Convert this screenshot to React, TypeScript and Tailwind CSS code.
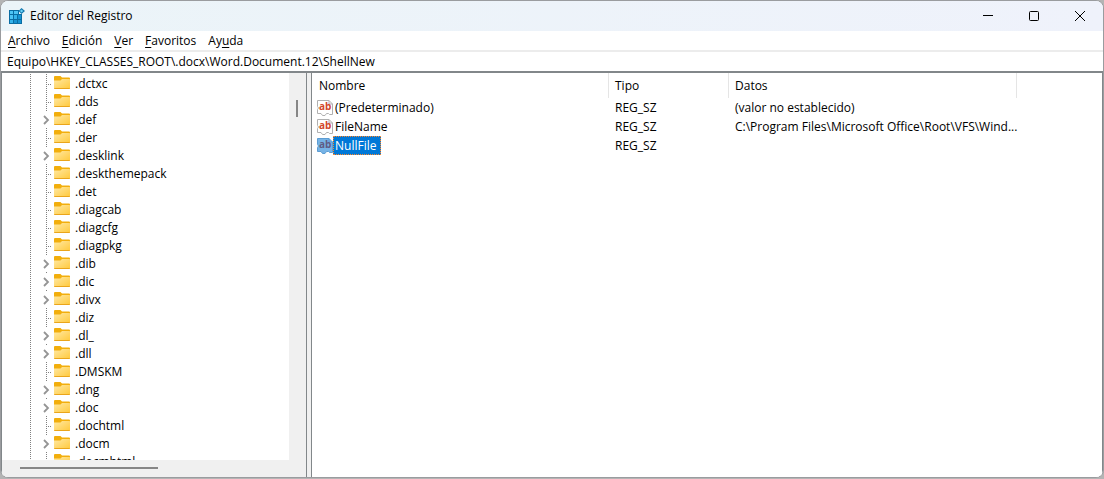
import React, { useState } from 'react';
import clsx from 'clsx';

interface TreeKey {
  name: string;
  hasChildren?: boolean;
}

interface RegistryValue {
  name: string;
  type: string;
  data: string;
}

const menuItems = [
  { before: '', hotkey: 'A', after: 'rchivo' },
  { before: '', hotkey: 'E', after: 'dición' },
  { before: '', hotkey: 'V', after: 'er' },
  { before: '', hotkey: 'F', after: 'avoritos' },
  { before: 'Ay', hotkey: 'u', after: 'da' },
];

const treeKeys: TreeKey[] = [
  { name: '.dctxc' },
  { name: '.dds' },
  { name: '.def', hasChildren: true },
  { name: '.der' },
  { name: '.desklink', hasChildren: true },
  { name: '.deskthemepack' },
  { name: '.det' },
  { name: '.diagcab' },
  { name: '.diagcfg' },
  { name: '.diagpkg' },
  { name: '.dib', hasChildren: true },
  { name: '.dic', hasChildren: true },
  { name: '.divx', hasChildren: true },
  { name: '.diz' },
  { name: '.dl_', hasChildren: true },
  { name: '.dll', hasChildren: true },
  { name: '.DMSKM' },
  { name: '.dng', hasChildren: true },
  { name: '.doc', hasChildren: true },
  { name: '.dochtml' },
  { name: '.docm', hasChildren: true },
  { name: '.docmhtml' },
];

const values: RegistryValue[] = [
  { name: '(Predeterminado)', type: 'REG_SZ', data: '(valor no establecido)' },
  {
    name: 'FileName',
    type: 'REG_SZ',
    data: 'C:\\Program Files\\Microsoft Office\\Root\\VFS\\Wind...',
  },
  { name: 'NullFile', type: 'REG_SZ', data: '' },
];

const RegeditIcon = () => (
  <svg className="h-4 w-4 shrink-0" viewBox="0 0 16 16" aria-hidden="true">
    <path d="M0 2h10v4h3v10H0z" fill="#0a6da3" />
    <path d="M1 3h3v3H1zM5 3h4v3H5zM1 7h3v4H1z" fill="#4cc4f5" />
    <path d="M5 7h3v4H5zM1 12h3v3H1z" fill="#35b4ec" />
    <path d="M9 7h3v4H9zM5 12h3v3H5zM9 12h3v3H9z" fill="#1593d2" />
    <path d="M12.5 0L16 3l-3.500 3L9.500 3z" fill="#1478ae" />
    <path d="M12.500 1.500L14.200 3l-1.700 1.500L11 3z" fill="#6bd3f8" />
  </svg>
);

const FolderIcon = () => (
  <svg className="h-[14px] w-4 shrink-0" viewBox="0 0 16 14" aria-hidden="true">
    <defs>
      <linearGradient id="folder" x1="0" y1="0" x2="1" y2="1">
        <stop offset="0" stopColor="#ffe8a3" />
        <stop offset="1" stopColor="#ffc93c" />
      </linearGradient>
    </defs>
    <path d="M0 1q0-1 1-1h5.500L8 1.500h7q1 0 1 1V6H0z" fill="#f2ae0c" />
    <path d="M0 4.500h6.500L8 3h7.500q.5 0 .5.500V12q0 1-1 1H1q-1 0-1-1z" fill="url(#folder)" />
    <path d="M0 12h16q0 1-1 1H1q-1 0-1-1z" fill="#eaa51b" />
  </svg>
);

const StringIcon = ({ selected }: { selected: boolean }) => (
  <svg className="h-4 w-4 shrink-0" viewBox="0 0 16 16" aria-hidden="true">
    <path
      d="M.5.500h11.500l3.500 3.500v10.500h-3l-1-1h-2l-1.500 2h-2.500l-1.500-2H.5v-4l1-1.500-1-1.500z"
      fill={selected ? '#76b3e6' : '#ffffff'}
      stroke={selected ? '#5c9dd3' : '#b0b0b0'}
    />
    <path d="M12 .500V4h3.500" fill="none" stroke={selected ? '#5c9dd3' : '#b0b0b0'} />
    <text
      x="2"
      y="10"
      fontSize="10"
      fontWeight="700"
      fill={selected ? '#5f5c85' : '#d2472a'}
      className="font-['Open_Sans',sans-serif]"
    >
      ab
    </text>
  </svg>
);

// Dotted connector lines to the left of a key
const Branch = ({ hasChildren }: { hasChildren?: boolean }) => (
  <svg
    className="h-[18px] w-[26px] shrink-0"
    viewBox="0 0 26 18"
    fill="none"
    stroke="#808080"
    shapeRendering="crispEdges"
    aria-hidden="true"
  >
    <path d="M4.500 0v18" strokeDasharray="1 1" />
    {hasChildren ? (
      <>
        <path d="M20.500 0v1" />
        <path d="M18 6l4 4-4 4" stroke="#949494" strokeWidth="1.800" shapeRendering="auto" />
      </>
    ) : (
      <path d="M20.500 0v18M20 10.500h6" strokeDasharray="1 1" />
    )}
  </svg>
);

const TitleBar = () => (
  <header className="flex h-[30px] shrink-0 items-center bg-linear-to-r from-[#ebf4f8] to-[#eff2fb] pl-2">
    <RegeditIcon />
    <h1 className="ml-[5px] flex-1 text-[12px]">Editor del Registro</h1>
    <button type="button" aria-label="Minimizar" className="flex h-full w-[46px] items-center justify-center">
      <svg className="h-[10px] w-[10px]" viewBox="0 0 10 10" stroke="#000" shapeRendering="crispEdges">
        <path d="M0 4.500h10" />
      </svg>
    </button>
    <button type="button" aria-label="Maximizar" className="flex h-full w-[46px] items-center justify-center">
      <svg className="h-[10px] w-[10px]" viewBox="0 0 10 10" fill="none" stroke="#000">
        <rect x=".5" y=".5" width="9" height="9" rx="1" />
      </svg>
    </button>
    <button type="button" aria-label="Cerrar" className="flex h-full w-[46px] items-center justify-center">
      <svg className="h-[10px] w-[10px]" viewBox="0 0 10 10" stroke="#000">
        <path d="M0 0l10 10M10 0L0 10" />
      </svg>
    </button>
  </header>
);

const KeyTree = () => (
  <nav
    aria-label="Claves"
    className="flex w-[305px] shrink-0 flex-col border-r border-[#82878a] bg-[#f0f0f0]"
  >
    <div className="flex min-h-0 flex-1">
      <ul className="min-w-0 flex-1 overflow-hidden bg-white pt-px pl-6">
        {treeKeys.map((key) => (
          <li key={key.name} className="h-[18px]">
            <button type="button" className="flex h-[18px] items-center whitespace-nowrap">
              <Branch hasChildren={key.hasChildren} />
              <span className="ml-[2px] flex items-center gap-[5px]">
                <FolderIcon />
                <span className="h-4">{key.name}</span>
              </span>
            </button>
          </li>
        ))}
      </ul>
      <div className="w-[17px] shrink-0 pt-[27px] pl-[7px]">
        <div className="h-[17px] w-[2px] bg-[#868686]" />
      </div>
    </div>
    <div className="h-[17px] shrink-0 pt-[7px] pl-[18px]">
      <div className="h-[2px] w-[138px] bg-[#868686]" />
    </div>
  </nav>
);

const ValueTable = () => {
  const [selected, setSelected] = useState('NullFile');

  return (
    <main className="min-w-0 flex-1 overflow-hidden border-l border-[#82878a] bg-white">
      <table className="w-[705px] table-fixed border-separate border-spacing-0 text-left">
        <colgroup>
          <col className="w-[297px]" />
          <col className="w-[120px]" />
          <col className="w-[288px]" />
        </colgroup>
        <thead>
          <tr className="h-[25px]">
            {['Nombre', 'Tipo', 'Datos'].map((title) => (
              <th
                key={title}
                scope="col"
                className="border-r border-[#e5e5e5] p-0 pl-[6px] font-normal first:pl-[7px]"
              >
                {title}
              </th>
            ))}
          </tr>
        </thead>
        <tbody>
          {values.map((value) => {
            const isSelected = value.name === selected;
            return (
              <tr key={value.name} className="h-[19px]">
                <td className="p-0 pl-[5px]">
                  <button
                    type="button"
                    className="flex h-[19px] items-center"
                    onClick={() => setSelected(value.name)}
                  >
                    <StringIcon selected={isSelected} />
                    <span
                      className={clsx(
                        'flex h-[19px] items-center border pr-1 pl-px',
                        isSelected
                          ? 'border-dotted border-[#ff8728] bg-[#0078d7] text-white'
                          : 'border-transparent'
                      )}
                    >
                      {value.name}
                    </span>
                  </button>
                </td>
                <td className="p-0 pl-[6px]">{value.type}</td>
                <td className="p-0 pl-[6px] whitespace-nowrap">{value.data}</td>
              </tr>
            );
          })}
        </tbody>
      </table>
    </main>
  );
};

const App: React.FC = () => {
  const [path, setPath] = useState('Equipo\\HKEY_CLASSES_ROOT\\.docx\\Word.Document.12\\ShellNew');

  return (
    <div className="h-screen bg-[#b4b4b4] pb-px font-['Open_Sans','Noto_Sans',sans-serif] text-[12px] leading-[18px] text-black">
      <div className="flex h-full flex-col overflow-hidden rounded-lg border border-[#9a9c9f] bg-white">
        <TitleBar />

        {/* Menu bar */}
        <nav aria-label="Menú" className="flex h-[19px] shrink-0 items-end gap-3 pl-[7px]">
          {menuItems.map((item) => (
            <button type="button" key={item.hotkey}>
              {item.before}
              <span className="underline underline-offset-2">{item.hotkey}</span>
              {item.after}
            </button>
          ))}
        </nav>

        {/* Address bar */}
        <input
          type="text"
          aria-label="Ruta de la clave"
          value={path}
          onChange={(e) => setPath(e.target.value)}
          className="h-[21px] w-full shrink-0 border-t-2 border-[#ececec] bg-white pl-[6px] outline-none"
        />

        {/* Panes */}
        <div className="flex min-h-0 flex-1 border-x border-t-2 border-[#82878a] bg-[#f0f0f0]">
          <KeyTree />
          <div className="w-1 shrink-0 cursor-col-resize" />
          <ValueTable />
        </div>
      </div>
    </div>
  );
};

export default App;
